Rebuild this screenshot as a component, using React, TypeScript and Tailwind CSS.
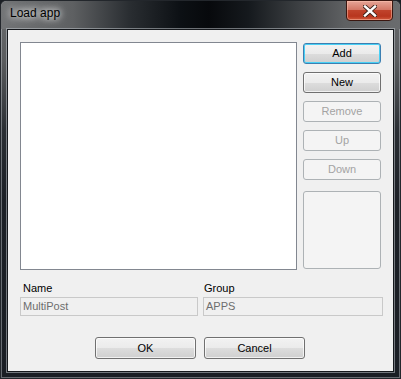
import React from 'react';

type Variant = 'normal' | 'default' | 'disabled';

const btnBase =
  "flex items-center justify-center rounded-[3px] border text-[11px] leading-none font-['Liberation_Sans',Arial,sans-serif]";

const btnStyles: Record<Variant, string> = {
  normal:
    'border-[#707070] text-black bg-[linear-gradient(to_bottom,#f2f2f2_0%,#ebebeb_50%,#dddddd_51%,#cfcfcf_100%)] shadow-[inset_0_0_0_1px_rgba(255,255,255,0.7)]',
  default:
    'border-[#3c7fb1] text-black bg-[linear-gradient(to_bottom,#f2f2f2_0%,#ebebeb_50%,#dddddd_51%,#cfcfcf_100%)] shadow-[inset_0_0_0_1px_#48d0f5]',
  disabled: 'border-[#adb2b5] text-[#a3a3a3] bg-[#f4f4f4]',
};

function WinButton({ label, variant = 'normal', className = '' }: { label: string; variant?: Variant; className?: string }) {
  return <div className={`${btnBase} ${btnStyles[variant]} ${className}`}>{label}</div>;
}

function Field({ label, value, width, labelPad }: { label: string; value: string; width: string; labelPad: string }) {
  return (
    <div className={`flex flex-col ${width}`}>
      <div className={`h-[13px] text-[11px] leading-[13px] text-black ${labelPad}`}>{label}</div>
      <div className="mt-[2px] h-[19px] border border-[#c9c9c9] bg-[#f0f0f0] pl-[2px] text-[11px] leading-[17px] text-[#6d6d6d]">
        {value}
      </div>
    </div>
  );
}

export default function App() {
  return (
    <div className="h-[379px] w-[401px] overflow-hidden bg-[#1b1f25]">
      {/* glass frame */}
      <div className="relative flex h-[379px] w-[401px] flex-col rounded-t-[6px] border border-[#23272c] bg-[linear-gradient(to_bottom,#6c6e70_0px,#5a5c5e_60px,#2a2e33_130px,#1c2026_200px,#1a1e24_100%)] shadow-[inset_0_0_0_1px_rgba(200,205,210,0.45)]">
        {/* title bar */}
        <div className="flex h-[28px] items-start rounded-t-[6px] bg-[linear-gradient(to_right,#727476_0%,#5e6062_18%,#2a2e32_32%,#0c1014_45%,#07090c_52%,#15191d_62%,#3e4144_75%,#5e6062_86%,#6a6c6e_100%)] pl-[8px] pt-[5px]">
          <span className="rounded-[6px] px-[1px] text-[12px] leading-[15px] text-black font-['Liberation_Sans',Arial,sans-serif] [text-shadow:0_0_6px_#ffffff,0_0_10px_#ffffff]">
            Load app
          </span>
          {/* close button */}
          <div className="absolute right-[7px] top-[-1px] flex h-[21px] w-[47px] items-center justify-center rounded-b-[4px] border border-[#3b1710] bg-[linear-gradient(to_bottom,#e6a597_0%,#d37866_45%,#c0432b_50%,#b8361e_80%,#d25a3c_100%)] shadow-[inset_0_0_0_1px_rgba(255,200,180,0.5)]">
            <svg width="14" height="12" viewBox="0 0 14 12">
              <path d="M2 1.5 L12 10.5 M12 1.5 L2 10.5" stroke="#3a2018" strokeWidth="4.2" strokeLinecap="square" />
              <path d="M2 1.5 L12 10.5 M12 1.5 L2 10.5" stroke="#ffffff" strokeWidth="2.4" strokeLinecap="square" />
            </svg>
          </div>
        </div>

        {/* client area */}
        <div className="ml-[6px] h-[343px] w-[387px] border border-[#15181c] bg-[#f0f0f0] pl-[12px] pt-[12px] font-['Liberation_Sans',Arial,sans-serif] shadow-[0_0_0_1px_rgba(190,195,200,0.55)]">
          <div className="flex">
            <div className="h-[228px] w-[277px] border border-[#828790] bg-white" />
            <div className="ml-[6px] mt-[1px] flex w-[78px] flex-col gap-[8px]">
              <WinButton label="Add" variant="default" className="h-[21px]" />
              <WinButton label="New" className="h-[21px]" />
              <WinButton label="Remove" variant="disabled" className="h-[21px]" />
              <WinButton label="Up" variant="disabled" className="h-[21px]" />
              <WinButton label="Down" variant="disabled" className="h-[21px]" />
              <div className="mt-[3px] h-[78px] rounded-[3px] border border-[#adb2b5] bg-[#f4f4f4]" />
            </div>
          </div>

          <div className="mt-[12px] flex gap-[5px]">
            <Field label="Name" value="MultiPost" width="w-[178px]" labelPad="pl-[3px]" />
            <Field label="Group" value="APPS" width="w-[180px]" labelPad="pl-[1px]" />
          </div>

          <div className="ml-[75px] mt-[21px] flex gap-[8px]">
            <WinButton label="OK" className="h-[22px] w-[101px]" />
            <WinButton label="Cancel" className="h-[22px] w-[101px]" />
          </div>
        </div>
      </div>
    </div>
  );
}
